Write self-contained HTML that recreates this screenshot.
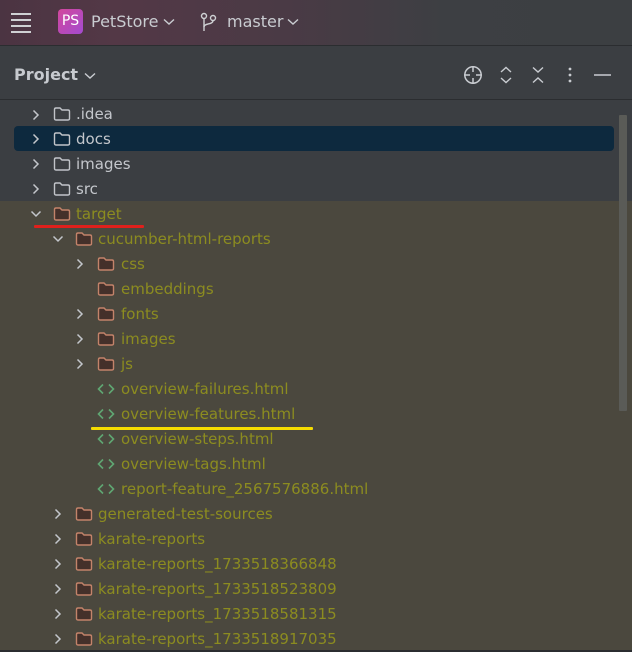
<!DOCTYPE html>
<html><head><meta charset="utf-8"><style>
*{margin:0;padding:0;box-sizing:border-box}
body{width:632px;height:652px;overflow:hidden;background:#3b3e42;font-family:"DejaVu Sans","Liberation Sans",sans-serif;position:relative}
.top{position:absolute;left:0;top:0;width:632px;height:46px;background:linear-gradient(90deg,#4b3442 0%,#533846 18%,#4a3a45 45%,#3d3f43 70%,#3c3f42 100%);border-bottom:1px solid #2b2d30}
.ph{position:absolute;top:47px;left:0;width:632px;height:53px;border-bottom:1px solid #2b2d30;background:#3b3e42}
.t{position:absolute;color:#c9ccd1;font-size:16px;line-height:20px;white-space:nowrap}
.olive{position:absolute;left:0;top:201px;width:632px;height:449px;background:#4b483e}
.sel{position:absolute;left:14px;top:126px;width:600px;height:25px;background:#0d293e;border-radius:4px}
.row{position:absolute;height:25px;line-height:25px;font-size:15px;white-space:nowrap}
.row svg{position:absolute;top:0}
.row span{position:absolute;top:0}
.g{color:#c4c7cc}.y{color:#8c8c20}
.sb{position:absolute;left:619px;top:115px;width:8px;height:296px;background:#5a5b57;border-radius:1px}
.bot{position:absolute;left:0;top:650px;width:632px;height:2px;background:#2b2d30}
</style></head><body>
<div class="top"></div>
<svg style="position:absolute;left:10px;top:12px" width="22" height="22" viewBox="0 0 22 22"><g stroke="#cfd1d4" stroke-width="2"><line x1="1" y1="2" x2="21" y2="2"/><line x1="1" y1="8" x2="21" y2="8"/><line x1="1" y1="14" x2="21" y2="14"/><line x1="1" y1="20" x2="21" y2="20"/></g></svg>
<div style="position:absolute;left:58px;top:9px;width:25px;height:25px;border-radius:4px;background:linear-gradient(135deg,#d2479c,#a44bd0);color:#fff;font-size:14px;line-height:25px;text-align:center">PS</div>
<div class="t" style="left:91px;top:12px">PetStore</div>
<svg style="position:absolute;left:163px;top:18px" width="12" height="8"><path d="M1 1.5L6 6L11 1.5" stroke="#c9ccd1" stroke-width="1.4" fill="none"/></svg>
<svg style="position:absolute;left:200px;top:12px" width="18" height="20" viewBox="0 0 18 20"><g stroke="#cfd1d4" stroke-width="1.4" fill="none"><circle cx="4" cy="4" r="2.5"/><circle cx="13" cy="6" r="2.5"/><line x1="4" y1="6.5" x2="4" y2="19"/><path d="M13 8.5C13 13 4 11 4 15"/></g></svg>
<div class="t" style="left:227px;top:12px">master</div>
<svg style="position:absolute;left:287px;top:18px" width="12" height="8"><path d="M1 1.5L6 6L11 1.5" stroke="#c9ccd1" stroke-width="1.4" fill="none"/></svg>

<div class="ph"></div>
<div class="t" style="left:14px;top:65px;font-weight:bold;font-size:16px;color:#c7cacf">Project</div>
<svg style="position:absolute;left:84px;top:72px" width="12" height="8"><path d="M1 1.5L6 6L11 1.5" stroke="#c9ccd1" stroke-width="1.4" fill="none"/></svg>
<svg style="position:absolute;left:462px;top:64px" width="22" height="22" viewBox="0 0 22 22"><g stroke="#c9ccd1" stroke-width="1.5" fill="none"><circle cx="11" cy="11" r="8.2"/><line x1="11" y1="2" x2="11" y2="8"/><line x1="11" y1="14" x2="11" y2="20"/><line x1="2" y1="11" x2="8" y2="11"/><line x1="14" y1="11" x2="20" y2="11"/></g></svg>
<svg style="position:absolute;left:499px;top:66px" width="14" height="18"><g stroke="#c9ccd1" stroke-width="1.4" fill="none"><path d="M2 6L7 1.5L12 6"/><path d="M2 12L7 16.5L12 12"/></g></svg>
<svg style="position:absolute;left:531px;top:66px" width="14" height="18"><g stroke="#c9ccd1" stroke-width="1.4" fill="none"><path d="M2 1.5L7 6L12 1.5"/><path d="M2 16.5L7 12L12 16.5"/></g></svg>
<svg style="position:absolute;left:566px;top:66px" width="8" height="18"><g fill="#c9ccd1"><circle cx="4" cy="3" r="1.4"/><circle cx="4" cy="9" r="1.4"/><circle cx="4" cy="15" r="1.4"/></g></svg>
<svg style="position:absolute;left:594px;top:74px" width="18" height="3"><line x1="0" y1="1" x2="17" y2="1" stroke="#c9ccd1" stroke-width="1.6"/></svg>

<div class="olive"></div>
<div class="sel"></div>
<div class="sb"></div>

<svg width="0" height="0" style="position:absolute">
<defs>
<symbol id="cr" viewBox="0 0 10 12"><path d="M2.5 1.5L7 6L2.5 10.5" stroke="#c3c6cb" stroke-width="1.5" fill="none"/></symbol>
<symbol id="cd" viewBox="0 0 12 10"><path d="M1.5 2.5L6 7L10.5 2.5" stroke="#c3c6cb" stroke-width="1.5" fill="none"/></symbol>
<symbol id="fg" viewBox="0 0 18 16"><path d="M1.5 3.5Q1.5 2 3 2H7L9 4H15Q16.5 4 16.5 5.5V12.5Q16.5 14 15 14H3Q1.5 14 1.5 12.5Z" stroke="#c1c4c9" stroke-width="1.4" fill="none"/></symbol>
<symbol id="fo" viewBox="0 0 18 16"><path d="M1.5 3.5Q1.5 2 3 2H7L9 4H15Q16.5 4 16.5 5.5V12.5Q16.5 14 15 14H3Q1.5 14 1.5 12.5Z" stroke="#c3836a" stroke-width="1.4" fill="#44302a"/></symbol>
<symbol id="ht" viewBox="0 0 18 12"><path d="M6 1.5L1.5 6L6 10.5M12 1.5L16.5 6L12 10.5" stroke="#5fa672" stroke-width="1.6" fill="none"/></symbol>
</defs></svg>

<div class="row" style="left:0;top:102px"><svg style="left:31px;top:7px" width="10" height="12"><use href="#cr"/></svg><svg style="left:53px;top:4px" width="18" height="16"><use href="#fg"/></svg><span class="g" style="left:76px">.idea</span></div>
<div class="row" style="left:0;top:127px"><svg style="left:31px;top:6px" width="10" height="12"><use href="#cr"/></svg><svg style="left:53px;top:4px" width="18" height="16"><use href="#fg"/></svg><span class="g" style="left:76px">docs</span></div>
<div class="row" style="left:0;top:152px"><svg style="left:31px;top:6px" width="10" height="12"><use href="#cr"/></svg><svg style="left:53px;top:4px" width="18" height="16"><use href="#fg"/></svg><span class="g" style="left:76px">images</span></div>
<div class="row" style="left:0;top:177px"><svg style="left:31px;top:6px" width="10" height="12"><use href="#cr"/></svg><svg style="left:53px;top:4px" width="18" height="16"><use href="#fg"/></svg><span class="g" style="left:76px">src</span></div>
<div class="row" style="left:0;top:202px"><svg style="left:30px;top:7px" width="12" height="10"><use href="#cd"/></svg><svg style="left:53px;top:4px" width="18" height="16"><use href="#fo"/></svg><span class="y" style="left:76px">target</span></div>
<div style="position:absolute;left:34px;top:225px;width:110px;height:3px;background:#e0201c;border-radius:1px"></div>

<div class="row" style="left:22px;top:227px"><svg style="left:30px;top:7px" width="12" height="10"><use href="#cd"/></svg><svg style="left:53px;top:4px" width="18" height="16"><use href="#fo"/></svg><span class="y" style="left:76px">cucumber-html-reports</span></div>

<div class="row" style="left:44px;top:252px"><svg style="left:31px;top:6px" width="10" height="12"><use href="#cr"/></svg><svg style="left:53px;top:4px" width="18" height="16"><use href="#fo"/></svg><span class="y" style="left:77px">css</span></div>
<div class="row" style="left:44px;top:277px"><svg style="left:53px;top:4px" width="18" height="16"><use href="#fo"/></svg><span class="y" style="left:77px">embeddings</span></div>
<div class="row" style="left:44px;top:302px"><svg style="left:31px;top:6px" width="10" height="12"><use href="#cr"/></svg><svg style="left:53px;top:4px" width="18" height="16"><use href="#fo"/></svg><span class="y" style="left:77px">fonts</span></div>
<div class="row" style="left:44px;top:327px"><svg style="left:31px;top:6px" width="10" height="12"><use href="#cr"/></svg><svg style="left:53px;top:4px" width="18" height="16"><use href="#fo"/></svg><span class="y" style="left:77px">images</span></div>
<div class="row" style="left:44px;top:352px"><svg style="left:31px;top:6px" width="10" height="12"><use href="#cr"/></svg><svg style="left:53px;top:4px" width="18" height="16"><use href="#fo"/></svg><span class="y" style="left:77px">js</span></div>
<div class="row" style="left:44px;top:377px"><svg style="left:53px;top:6px" width="18" height="12"><use href="#ht"/></svg><span class="y" style="left:77px">overview-failures.html</span></div>
<div class="row" style="left:44px;top:402px"><svg style="left:53px;top:6px" width="18" height="12"><use href="#ht"/></svg><span class="y" style="left:77px">overview-features.html</span></div>
<div style="position:absolute;left:91px;top:427px;width:222px;height:3px;background:#f5dc00;border-radius:1px"></div>
<div class="row" style="left:44px;top:427px"><svg style="left:53px;top:6px" width="18" height="12"><use href="#ht"/></svg><span class="y" style="left:77px">overview-steps.html</span></div>
<div class="row" style="left:44px;top:452px"><svg style="left:53px;top:6px" width="18" height="12"><use href="#ht"/></svg><span class="y" style="left:77px">overview-tags.html</span></div>
<div class="row" style="left:44px;top:477px"><svg style="left:53px;top:6px" width="18" height="12"><use href="#ht"/></svg><span class="y" style="left:77px">report-feature_2567576886.html</span></div>

<div class="row" style="left:22px;top:502px"><svg style="left:31px;top:6px" width="10" height="12"><use href="#cr"/></svg><svg style="left:53px;top:4px" width="18" height="16"><use href="#fo"/></svg><span class="y" style="left:76px">generated-test-sources</span></div>
<div class="row" style="left:22px;top:527px"><svg style="left:31px;top:6px" width="10" height="12"><use href="#cr"/></svg><svg style="left:53px;top:4px" width="18" height="16"><use href="#fo"/></svg><span class="y" style="left:76px">karate-reports</span></div>
<div class="row" style="left:22px;top:552px"><svg style="left:31px;top:6px" width="10" height="12"><use href="#cr"/></svg><svg style="left:53px;top:4px" width="18" height="16"><use href="#fo"/></svg><span class="y" style="left:76px">karate-reports_1733518366848</span></div>
<div class="row" style="left:22px;top:577px"><svg style="left:31px;top:6px" width="10" height="12"><use href="#cr"/></svg><svg style="left:53px;top:4px" width="18" height="16"><use href="#fo"/></svg><span class="y" style="left:76px">karate-reports_1733518523809</span></div>
<div class="row" style="left:22px;top:602px"><svg style="left:31px;top:6px" width="10" height="12"><use href="#cr"/></svg><svg style="left:53px;top:4px" width="18" height="16"><use href="#fo"/></svg><span class="y" style="left:76px">karate-reports_1733518581315</span></div>
<div class="row" style="left:22px;top:627px"><svg style="left:31px;top:6px" width="10" height="12"><use href="#cr"/></svg><svg style="left:53px;top:4px" width="18" height="16"><use href="#fo"/></svg><span class="y" style="left:76px">karate-reports_1733518917035</span></div>
<div class="bot"></div>
</body></html>
